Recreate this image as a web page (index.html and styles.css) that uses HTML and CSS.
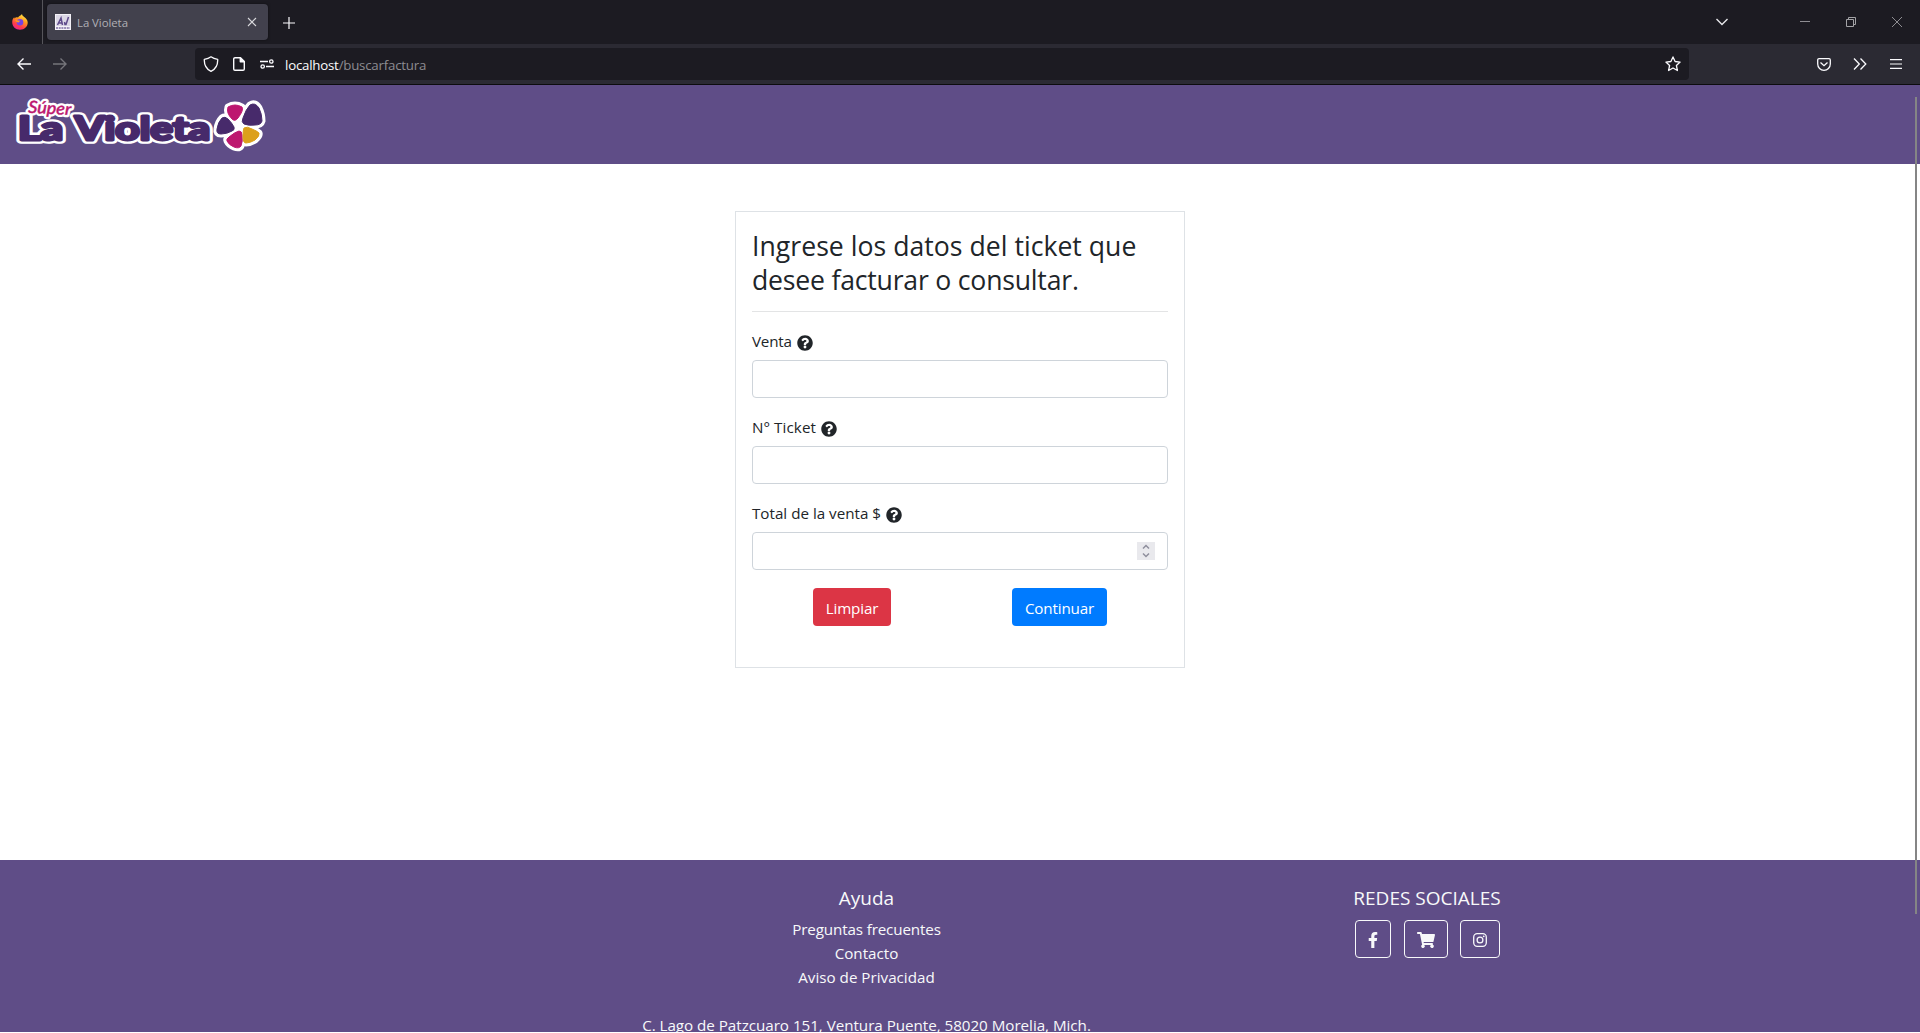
FILE: index.html
```
<!DOCTYPE html>
<html lang="es">
<head>
<meta charset="utf-8">
<title>La Violeta</title>
<link rel="stylesheet" href="styles.css">
</head>
<body>
<div class="tabbar">
  <div class="firefox">
    <svg width="16" height="16" viewBox="0 0 16 16">
      <defs>
        <linearGradient id="fx" x1="0.8" y1="0" x2="0.3" y2="1"><stop offset="0" stop-color="#fff44f"/><stop offset=".4" stop-color="#ff9a1f"/><stop offset=".75" stop-color="#ff3b4a"/><stop offset="1" stop-color="#e9209b"/></linearGradient>
      </defs>
      <path d="M10 0c.2 1.500 1 2 2.200 3 1.800 1.300 3.300 2.800 3.500 5.300.2 4.200-3.200 7.500-7.700 7.500C3.700 15.800.2 12.700.2 8.300.2 6 1 4.200 2.200 3.200l.4 1.200C3.500 3.300 4.500 3 6 3.500 7 1.800 8.500 2 10 0z" fill="url(#fx)"/>
      <circle cx="8" cy="8.300" r="3.300" fill="#7542e5"/>
      <path d="M3.200 6.500c1-.7 2-.6 2.800 0 .8-.3 2 0 2.500.6-.8.200-1.500.8-2 1.300-1 .1-2-.4-3.300-1.900z" fill="#ff9a1f"/>
    </svg>
  </div>
  <div class="tab">
    <svg class="favicon" width="16" height="16" viewBox="0 0 16 16">
      <path d="M0 0h16v16H0z" fill="#f4f2f8"/><path d="M1 1h14v11H1z" fill="#dcd8e6"/>
      <path d="M2.500 11 6 4l1.500 7M4 9h3.500M9.500 8l.5 2.500h1L13.500 3" fill="none" stroke="#5f4b8b" stroke-width="1.500"/>
      <path d="M1 14h14" stroke="#7d6da3" stroke-width="1.300" stroke-dasharray="2 .7"/>
    </svg>
    <span class="tab-title">La Violeta</span>
    <svg width="10" height="10" viewBox="0 0 10 10" fill="none" stroke="#d8d8dc" stroke-width="1.100"><path d="M1 1l8 8M9 1 1 9"/></svg>
  </div>
  <svg class="newtab" width="12" height="12" viewBox="0 0 12 12" stroke="#fbfbfe" stroke-width="1.200"><path d="M6 0v12M0 6h12"/></svg>
  <div class="window-controls">
    <svg width="12" height="8" viewBox="0 0 12 8" fill="none" stroke="#e6e6ea" stroke-width="1.400"><path d="M.5 1 6 6.500 11.500 1"/></svg>
    <svg width="10" height="10" viewBox="0 0 10 10" stroke="#8e8d92"><path d="M0 4.500h10"/></svg>
    <svg width="10" height="10" viewBox="0 0 10 10" fill="none" stroke="#a3a3a6"><path d="M.5 2.500h7v7h-7zM2.500 2.500v-2h7v7h-2"/></svg>
    <svg width="10" height="10" viewBox="0 0 10 10" stroke="#8e8d92"><path d="M0 0l10 10M10 0 0 10"/></svg>
  </div>
</div>
<div class="toolbar">
  <div class="nav">
    <svg width="14" height="12" viewBox="0 0 14 12" fill="none" stroke="#fbfbfe" stroke-width="1.400"><path d="M14 6H1M6.500.5 1 6l5.500 5.500"/></svg>
    <svg width="14" height="12" viewBox="0 0 14 12" fill="none" stroke="#76757b" stroke-width="1.400"><path d="M0 6h13M7.500.5 13 6l-5.500 5.500"/></svg>
  </div>
  <div class="urlbar">
    <svg width="16" height="16" viewBox="0 0 16 16" fill="none" stroke="#fbfbfe" stroke-width="1.300" stroke-linejoin="round"><path d="M8 .8c2 1.500 4.500 2.200 6.700 2.500.2 5-1.700 9.700-6.700 12-5-2.300-6.900-7-6.700-12C3.500 3 6 2.300 8 .8z"/></svg>
    <svg class="doc" width="12" height="14" viewBox="0 0 12 14" fill="none" stroke="#fbfbfe" stroke-width="1.400" stroke-linejoin="round"><path d="M2 .7h5.500l3.800 3.800V12a1.300 1.300 0 0 1-1.300 1.300H2A1.300 1.300 0 0 1 .7 12V2A1.300 1.300 0 0 1 2 .7z"/><path d="M7.300 1v3.800h3.800z" fill="#fbfbfe"/></svg>
    <svg class="perm" width="14" height="10" viewBox="0 0 14 10" fill="none" stroke="#fbfbfe" stroke-width="1.300"><path d="M0 2.500h8M6 7.500h8"/><circle cx="11.300" cy="2.500" r="1.700"/><circle cx="2.700" cy="7.500" r="1.700"/></svg>
    <span class="url">localhost<span class="path">/buscarfactura</span></span>
    <svg class="star" width="16" height="16" viewBox="0 0 16 16" fill="none" stroke="#fbfbfe" stroke-width="1.300" stroke-linejoin="round"><path d="M8 .9l2.100 4.600 5 .6-3.700 3.400 1 5L8 12l-4.400 2.500 1-5L.9 6.100l5-.6z"/></svg>
  </div>
  <div class="tools">
    <svg width="14" height="13" viewBox="0 0 14 13" fill="none" stroke="#fbfbfe" stroke-width="1.300"><path d="M2 .7h10A1.300 1.300 0 0 1 13.300 2v4A6.300 6.300 0 0 1 .7 6V2A1.300 1.300 0 0 1 2 .7zM3.500 4.500 7 7.700l3.500-3.200"/></svg>
    <svg width="14" height="12" viewBox="0 0 14 12" fill="none" stroke="#fbfbfe" stroke-width="1.300"><path d="M1 .5 6.300 6 1 11.500M7.500.5 12.800 6l-5.300 5.500"/></svg>
    <svg width="12" height="10" viewBox="0 0 12 10" stroke="#fbfbfe" stroke-width="1.200"><path d="M0 .6h12M0 5h12M0 9.400h12"/></svg>
  </div>
</div>
<header class="site-header">
  <svg class="logo" width="260" height="60" viewBox="10 95 260 60">
    <g stroke-linejoin="round">
      <g class="wordmark outline"><text x="18" y="140" textLength="45" lengthAdjust="spacingAndGlyphs">La</text><text x="75" y="140" textLength="135" lengthAdjust="spacingAndGlyphs">Violeta</text></g>
      <g class="super outline" transform="rotate(3 50 112)"><text x="28" y="114" textLength="43" lengthAdjust="spacingAndGlyphs">Súper</text></g>
      <g class="wordmark"><text x="18" y="140" textLength="45" lengthAdjust="spacingAndGlyphs">La</text><text x="75" y="140" textLength="135" lengthAdjust="spacingAndGlyphs">Violeta</text></g>
      <g class="super" transform="rotate(3 50 112)"><text x="28" y="114" textLength="43" lengthAdjust="spacingAndGlyphs">Súper</text></g>
      <g fill="#fff" stroke="#fff" stroke-width="7">
        <path d="M228 107q7-4 14 0 2 3-4 11-3 4-6 1-6-6-4-12z"/><path d="M250 105q5-3 9 3 3 6 3 13-1 4-7 4-6 1-11-1-3-2-1-6 3-9 7-13z"/><path d="M222 118q3-2 6 1 4 4 6 8 1 3-2 4-5 3-11 3-5 0-4-5 1-7 5-11z"/><path d="M229 137q6-5 10-6 3 0 3 4 1 6-1 11-2 3-7 1-5-2-7-6-1-2 2-4z"/><path d="M244 128q3-2 8 1 5 2 7 4 1 3-4 7-5 3-9 3-3 0-3-6 0-7 1-9z"/><path d="M236 121h8v8h-8z"/>
      </g>
      <g stroke-width="1"><path class="pink" d="M228 107q7-4 14 0 2 3-4 11-3 4-6 1-6-6-4-12z"/><path class="plum" d="M250 105q5-3 9 3 3 6 3 13-1 4-7 4-6 1-11-1-3-2-1-6 3-9 7-13z"/><path class="plum" d="M222 118q3-2 6 1 4 4 6 8 1 3-2 4-5 3-11 3-5 0-4-5 1-7 5-11z"/><path class="pink" d="M229 137q6-5 10-6 3 0 3 4 1 6-1 11-2 3-7 1-5-2-7-6-1-2 2-4z"/><path class="gold" d="M244 128q3-2 8 1 5 2 7 4 1 3-4 7-5 3-9 3-3 0-3-6 0-7 1-9z"/></g>
    </g>
  </svg>
</header>
<main class="main">
  <form class="card">
    <h3 class="title"><span class="line">Ingrese los datos del ticket que</span><span class="line tight">desee facturar o consultar.</span></h3>
    <div class="field"><label class="label"><span class="venta">Venta</span> <svg class="help" viewBox="0 0 512 512"><use href="#q"/></svg></label><div class="input"></div></div>
    <div class="field"><label class="label"><span class="ticket">N° Ticket</span> <svg class="help" viewBox="0 0 512 512"><use href="#q"/></svg></label><div class="input"></div></div>
    <div class="field"><label class="label"><span class="total">Total de la venta $</span> <svg class="help" viewBox="0 0 512 512"><use href="#q"/></svg></label>
      <div class="input"><svg class="spin" width="18" height="18" viewBox="0 0 18 18"><path d="M0 0h18v18H0z" fill="#e9e9ed"/><path d="M6 6.500l3-3 3 3M6 11.500l3 3 3-3" fill="none" stroke="#8f8f9d" stroke-width="1.500"/></svg></div></div>
    <div class="actions"><button type="button" class="btn danger">Limpiar</button><button type="button" class="btn primary">Continuar</button></div>
  </form>
</main>
<footer class="footer">
  <div class="help-col">
    <h5 class="h5">Ayuda</h5>
    <div class="link freq">Preguntas frecuentes</div><div class="link">Contacto</div><div class="link">Aviso de Privacidad</div>
    <div class="link address">C. Lago de Patzcuaro 151, Ventura Puente, 58020 Morelia, Mich.</div>
  </div>
  <div class="social-col">
    <h5 class="h5">REDES SOCIALES</h5>
    <div class="socials">
      <a class="social fb"><svg width="10" height="16" viewBox="0 0 320 512"><path d="M279 288l14-93h-89v-60c0-25 12-50 52-50h41V7s-37-7-72-7c-73 0-121 44-121 125v70H23v93h81v224h100V288z"/></svg></a>
      <a class="social cart"><svg width="18" height="16" viewBox="0 0 576 512"><path d="M528 301l47-208c4-15-8-29-23-29H159l-9-45C148 8 138 0 126 0H24C11 0 0 11 0 24v16c0 13 11 24 24 24h70l70 343a56 56 0 1 0 67 9h210a56 56 0 1 0 64-10l5-25c4-15-8-29-23-29H218l-7-32h294c11 0 21-8 23-19z"/></svg></a>
      <a class="social ig"><svg width="14" height="14" viewBox="0 0 14 14" fill="none"><rect x=".7" y=".7" width="12.600" height="12.600" rx="3.500" stroke="#f8f9fa" stroke-width="1.300"/><circle cx="7" cy="7" r="2.900" stroke="#f8f9fa" stroke-width="1.300"/><circle cx="10.700" cy="3.300" r=".9" fill="#f8f9fa"/></svg></a>
    </div>
  </div>
</footer>
<div class="scroll-thumb"></div>
<svg class="defs" width="0" height="0"><defs><path id="q" fill="#212529" d="M504 256c0 137-111 248-248 248S8 393 8 256 119 8 256 8s248 111 248 248zM262 90c-54 0-89 23-116 64-4 5-3 12 3 16l34 27c6 4 13 3 17-2 18-23 30-36 57-36 21 0 46 13 46 33 0 15-12 23-33 34-24 14-55 30-55 72v6c0 7 5 12 12 12h56c7 0 12-5 12-12v-4c0-29 85-30 85-108 0-59-61-102-118-102zm-6 248a46 46 0 1 0 0 92 46 46 0 0 0 0-92z"/></defs></svg>
</body>
</html>
```
FILE: styles.css
```
* { box-sizing: border-box; }
body { margin: 0; height: 1033px; overflow: hidden; display: flex; flex-direction: column; background: #fff; color: #212529; font: 15.2px/24px "Open Sans", "Noto Sans", sans-serif; }
svg { display: block; flex: none; }

/* Browser window */
.tabbar { height: 44px; flex: none; display: flex; align-items: center; background: #1c1b22; }
.firefox { width: 43px; height: 44px; padding: 14px 0 0 12px; border-right: 1px solid #56555b; }
.tab { width: 221px; height: 36px; margin-left: 4px; padding: 0 11px 0 8px; display: flex; align-items: center; border-radius: 4px; background: #42414d; box-shadow: 0 0 3px rgba(0,0,0,.5); }
.tab-title { flex: 1; margin-left: 6px; padding-top: 2px; font-size: 11.4px; letter-spacing: -.05px; color: #b0b0b5; }
.newtab { margin: 1px 0 0 15px; }
.window-controls { margin-left: auto; padding-right: 18px; display: flex; align-items: center; }
.window-controls svg:nth-child(1) { margin-right: 72px; }
.window-controls svg:nth-child(2), .window-controls svg:nth-child(3) { margin-right: 36px; }
.toolbar { height: 41px; flex: none; display: flex; align-items: center; background: #2b2a33; border-bottom: 1px solid #0c0c0d; }
.nav { width: 195px; padding-left: 17px; display: flex; gap: 22px; }
.urlbar { width: 1494px; height: 32px; padding: 0 8px; display: flex; align-items: center; border-radius: 4px; background: #1c1b22; }
.doc { margin-left: 14px; }
.perm { margin-left: 15px; }
.url { margin-left: 11px; color: #fbfbfe; font-size: 13.3px; letter-spacing: -.23px; padding-top: 2px; }
.path { color: #8c8b91; }
.star { margin-left: auto; }
.tools { margin-left: auto; padding-right: 18px; display: flex; align-items: center; gap: 22px; }
.tools svg:last-child { margin-left: 1px; }

/* Site header */
.site-header { height: 79px; flex: none; padding: 10px 0 0 10px; background: #5f4d87; }
.wordmark { font: 700 32px "Lato", sans-serif; fill: #472a6b; stroke: #472a6b; stroke-width: 3px; }
.super { font: italic 500 17px "Lato", sans-serif; fill: #bd176f; stroke: #bd176f; stroke-width: .4px; }
.outline { fill: #fff; stroke: #fff; stroke-width: 7.6px; }
.super.outline { stroke-width: 5px; }
.pink { fill: #bd176f; stroke: #bd176f; }
.plum { fill: #472a6b; stroke: #472a6b; }
.gold { fill: #dca01b; stroke: #dca01b; }

/* Ticket form */
.main { height: 696px; flex: none; padding-top: 47px; display: flex; justify-content: center; align-items: flex-start; }
.card { width: 450px; height: 457px; padding: 16px; border: 1px solid #dee2e6; }
.title { margin: 0 0 16px; padding: 2px 0 13.8px; border-bottom: 1px solid #e3e4e5; font-weight: 400; font-size: 26.6px; line-height: 33.6px; }
.line { display: block; white-space: nowrap; letter-spacing: .03px; }
.line.tight { letter-spacing: -.2px; }
.field { margin-bottom: 16px; }
.label { display: flex; height: 24px; padding-top: 1px; margin-bottom: 8px; gap: 5px; white-space: nowrap; }
.help { width: 16px; height: 16px; margin-top: 6px; }
.venta { letter-spacing: -.2px; }
.ticket { letter-spacing: .08px; }
.input { height: 38px; padding-right: 12px; display: flex; align-items: center; justify-content: flex-end; border: 1px solid #ced4da; border-radius: 4px; }
.actions { display: flex; padding: 2px 0 0 61px; gap: 121px; }
.btn { height: 38px; padding: 2px 0 0; border: 0; border-radius: 4px; color: #fff; font: 15.2px/24px "Open Sans", sans-serif; letter-spacing: -.15px; }
.danger { width: 78px; background: #dc3545; }
.primary { width: 95px; background: #007bff; }

/* Footer */
.footer { height: 172px; flex: none; padding-top: 26px; overflow: hidden; display: grid; grid-template-columns: 642px 449px 672px; justify-content: start; background: #5f4d87; color: #f8f9fa; text-align: center; }
.help-col { grid-column: 2; }
.social-col { display: flex; flex-direction: column; align-items: center; width: 672px; }
.h5 { margin: 0 0 7px; font-size: 19px; line-height: 24px; font-weight: 400; }
.link { height: 24px; white-space: nowrap; }
.freq { letter-spacing: -.13px; }
.address { margin-top: 24px; letter-spacing: -.03px; }
.socials { display: flex; margin-top: 3px; }
.social { height: 38px; display: flex; align-items: center; justify-content: center; border: 1px solid #f8f9fa; border-radius: 4px; padding-top: 2px; fill: #f8f9fa; }
.fb { width: 36px; }
.cart { width: 44px; margin: 0 12px 0 13px; }
.ig { width: 40px; }
.scroll-thumb { position: absolute; left: 1915px; top: 97px; width: 2px; height: 817px; background: #858585; }
.defs { position: absolute; }
```
